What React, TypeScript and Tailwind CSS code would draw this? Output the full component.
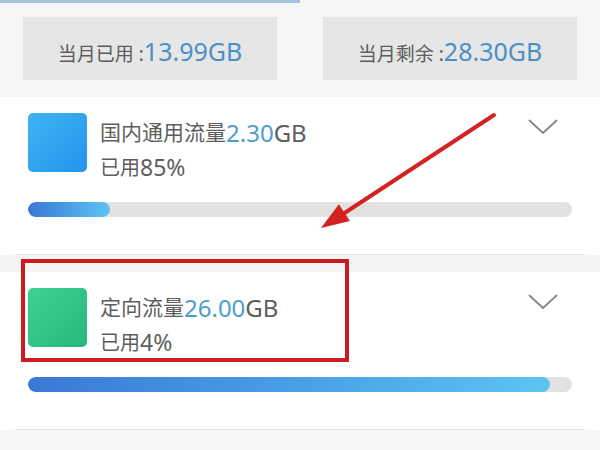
import React from "react";

function StatBox({ label, value }: { label: string; value: string }) {
  return (
    <div className="w-[254px] h-[63px] bg-[#e6e6e6] flex items-center justify-center pt-[6px]">
      <div className="flex items-baseline leading-none">
        <span className="text-[19px] text-[#5c5c5c]">{label} :</span>
        <span className="text-[25px] text-[#4a90c6]">{value}</span>
      </div>
    </div>
  );
}

function Chevron() {
  return (
    <svg width="30" height="16" viewBox="0 0 30 16" className="mt-[6px] shrink-0">
      <polyline points="1.5,1.5 15,14 28.5,1.5" fill="none" stroke="#858585" strokeWidth="1.8" strokeLinecap="round" strokeLinejoin="round" />
    </svg>
  );
}

function Card({
  square,
  title,
  amount,
  used,
  fill,
}: {
  square: string;
  title: string;
  amount: string;
  used: string;
  fill: string;
}) {
  return (
    <div className="bg-white pt-[16px]">
      <div className="flex items-start pl-[28px] pr-[42px]">
        <div className={`w-[59px] h-[59px] rounded-[5px] shrink-0 ${square}`} />
        <div className="flex-1 pl-[13px] pt-[2px] text-[#5e5e5e]">
          <div className="h-[35px] flex items-center">
            <span className="text-[21px]">{title}</span>
            <span className="text-[24px] text-[#4aa0c9]">{amount}</span>
            <span className="text-[24px]">GB</span>
          </div>
          <div className="h-[35px] flex items-center">
            <span className="text-[20px]">已用</span>
            <span className="text-[23px]">{used}</span>
          </div>
        </div>
        <Chevron />
      </div>
      <div className="mx-[28px] mt-[17px] h-[15px] rounded-full bg-[#e2e2e2] overflow-hidden">
        <div
          className="h-full rounded-full bg-gradient-to-r from-[#3a78d6] to-[#5cc4f3]"
          style={{ width: fill }}
        />
      </div>
      <div className="pt-[37px]">
        <div className="mx-[15px] h-[1px] bg-[#e4e4e4]" />
      </div>
    </div>
  );
}

export default function App() {
  return (
    <div className="relative w-[600px] h-[450px] overflow-hidden bg-[#f4f5f7] font-['Noto_Sans','Noto_Sans_CJK_SC',sans-serif]">
      <div className="h-[3px] w-[300px] bg-[#a3c0dc]" />
      <div className="flex gap-[46px] pl-[23px] pt-[14px] pb-[17px]">
        <StatBox label="当月已用" value="13.99GB" />
        <StatBox label="当月剩余" value="28.30GB" />
      </div>
      <Card
        square="bg-gradient-to-br from-[#40b3f5] to-[#2294ec]"
        title="国内通用流量"
        amount="2.30"
        used="85%"
        fill="15%"
      />
      <div className="h-[17px] bg-[#f4f4f4]" />
      <Card
        square="bg-gradient-to-br from-[#3dd295] to-[#27b77a]"
        title="定向流量"
        amount="26.00"
        used="4%"
        fill="96%"
      />

      {/* annotation: red highlight box */}
      <div className="absolute left-[21px] top-[259px] w-[328px] h-[103px] border-[4px] border-[#cc1b1f]" />

      {/* annotation: red arrow */}
      <svg className="absolute left-0 top-0" width="600" height="450" viewBox="0 0 600 450">
        <line x1="494" y1="115" x2="340" y2="216" stroke="#d42222" strokeWidth="4" strokeLinecap="round" />
        <polygon points="321,228 338.9,204.2 349.9,221" fill="#d42222" />
      </svg>
    </div>
  );
}
